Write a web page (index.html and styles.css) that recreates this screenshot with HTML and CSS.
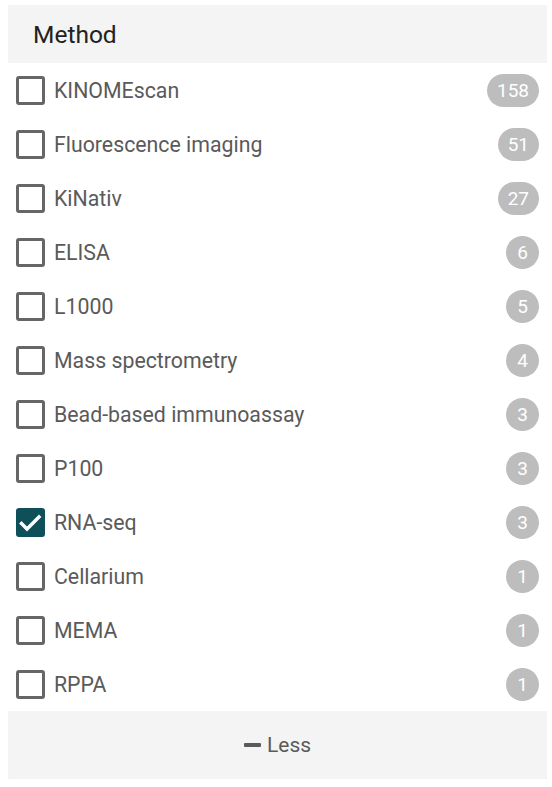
FILE: index.html
```html
<!DOCTYPE html>
<html>
<head>
<meta charset="utf-8">
<link rel="stylesheet" href="styles.css">
</head>
<body>
<div class="card">
  <div class="card-header">Method</div>
  <ul class="list">
    <li class="item"><span class="box"></span><span class="label">KINOMEscan</span><span class="badge">158</span></li>
    <li class="item"><span class="box"></span><span class="label">Fluorescence imaging</span><span class="badge">51</span></li>
    <li class="item"><span class="box"></span><span class="label">KiNativ</span><span class="badge">27</span></li>
    <li class="item"><span class="box"></span><span class="label">ELISA</span><span class="badge">6</span></li>
    <li class="item"><span class="box"></span><span class="label">L1000</span><span class="badge">5</span></li>
    <li class="item"><span class="box"></span><span class="label">Mass spectrometry</span><span class="badge">4</span></li>
    <li class="item"><span class="box"></span><span class="label">Bead-based immunoassay</span><span class="badge">3</span></li>
    <li class="item"><span class="box"></span><span class="label">P100</span><span class="badge">3</span></li>
    <li class="item"><span class="box checked"><svg viewBox="0 0 29 29" width="29" height="29"><path d="M5.5 15.5l5.5 5.5L23 9" fill="none" stroke="#fff" stroke-width="3.4" stroke-linecap="square"/></svg></span><span class="label">RNA-seq</span><span class="badge">3</span></li>
    <li class="item"><span class="box"></span><span class="label">Cellarium</span><span class="badge">1</span></li>
    <li class="item"><span class="box"></span><span class="label">MEMA</span><span class="badge">1</span></li>
    <li class="item"><span class="box"></span><span class="label">RPPA</span><span class="badge">1</span></li>
  </ul>
  <div class="card-footer"><span class="minus"></span><span class="less">Less</span></div>
</div>
</body>
</html>
```

FILE: styles.css
```css
html, body { background: #fff; }
body {
  margin: 5px 5px 8px 8px;
  font-family: Roboto, "Noto Sans", sans-serif;
}
.card {
  width: 539px;
  background: #fff;
  box-shadow: 0 2px 4px rgba(0,0,0,0.2), 0 0 2px rgba(0,0,0,0.12);
  border-radius: 2px;
  overflow: hidden;
}
.card-header {
  height: 58px;
  box-sizing: border-box;
  background: #f4f4f4;
  padding-left: 25px;
  display: flex;
  align-items: center;
  font-size: 24.5px;
  color: #222;
}
.list {
  list-style: none;
  margin: 0;
  padding: 0;
}
.item {
  height: 54px;
  display: flex;
  align-items: center;
  padding: 0 8px 0 8px;
}
.box {
  width: 29px;
  height: 29px;
  box-sizing: border-box;
  border: 3px solid #666;
  border-radius: 3px;
  flex: none;
  display: flex;
  align-items: center;
  justify-content: center;
}
.box.checked {
  background: #0e4f5a;
  border: none;
}
.label {
  margin-left: 9px;
  font-size: 21.3px;
  color: #5a5a5a;
  flex: 1;
}
.badge {
  min-width: 33px;
  height: 33px;
  box-sizing: border-box;
  padding: 0 10px;
  border-radius: 17px;
  background: #bdbdbd;
  color: #fff;
  font-size: 19px;
  display: flex;
  align-items: center;
  justify-content: center;
}
.card-footer {
  height: 68px;
  background: #f4f4f4;
  display: flex;
  align-items: center;
  justify-content: center;
  color: #5a5a5a;
  font-size: 21px;
}
.minus {
  width: 17px;
  height: 4px;
  border-radius: 1px;
  background: #5a5a5a;
  margin-right: 6px;
}
```
